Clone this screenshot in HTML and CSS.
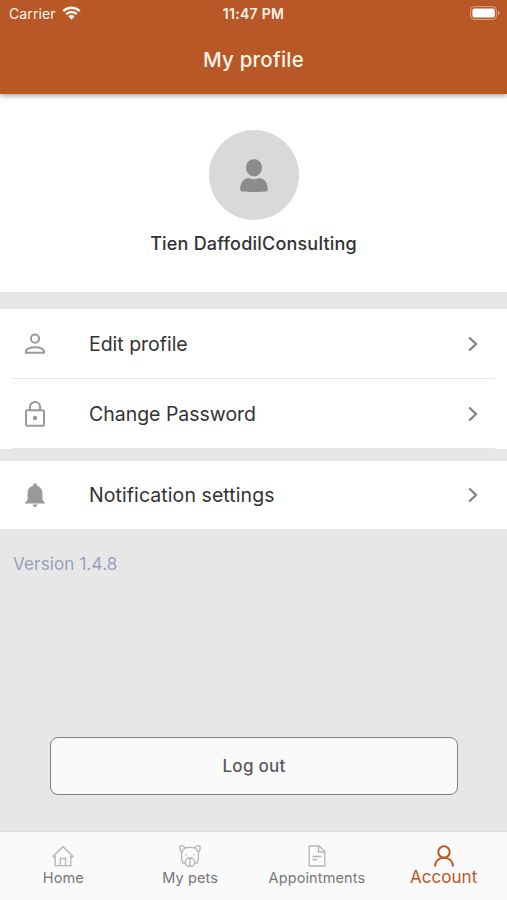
FILE: index.html
```html
<!DOCTYPE html>
<html lang="en">
<head>
    <meta charset="UTF-8">
    <meta name="viewport" content="width=device-width, initial-scale=1.0">
    <title>My profile</title>
    <link rel="stylesheet" href="styles.css">
</head>
<body>
    <header class="header">
        <div class="status-bar">
            <div class="carrier">
                <span>Carrier</span>
                <svg class="wifi" viewBox="0 0 19 14" width="19" height="14">
                    <path d="M1.3 5.2a11.7 11.7 0 0 1 16.4 0M4.2 8.2a7.6 7.6 0 0 1 10.6 0" fill="none" stroke="currentColor" stroke-width="2.5"/>
                    <path d="M6.300 10.300a4.600 4.600 0 0 1 6.400 0L9.500 13.700z" fill="currentColor"/>
                </svg>
            </div>
            <div class="time">11:47 PM</div>
            <svg class="battery" viewBox="0 0 30 14" width="30" height="14">
                <rect x=".6" y=".6" width="25.8" height="12.8" rx="3.6" fill="none" stroke="currentColor" opacity=".45"/>
                <rect x="2.4" y="2.4" width="22.4" height="9.2" rx="2" fill="currentColor"/>
                <path d="M28 4.8c2 .8 2 3.6 0 4.4z" fill="currentColor" opacity=".5"/>
            </svg>
        </div>
        <h1 class="title">My profile</h1>
    </header>

    <main class="content">
        <section class="profile">
            <div class="avatar">
                <svg viewBox="0 0 28 33" width="28" height="33">
                    <ellipse cx="14" cy="8.7" rx="8.1" ry="8.7"/>
                    <path d="M8.2 19C10 18.900 11 20.300 14 20.300s4-1.400 5.800-1.300c5 .6 8 5.500 8 11.200 0 1.500-.8 2.100-2.300 2.300-5.500.6-17.500.6-23 0C1 32.300.2 31.700.2 30.200.2 24.500 3.200 19.600 8.200 19z"/>
                </svg>
            </div>
            <div class="name">Tien DaffodilConsulting</div>
        </section>

        <nav class="menu">
            <a class="menu-item">
                <svg class="menu-icon" viewBox="0 0 20 26" width="20" height="26">
                    <circle cx="10" cy="7.7" r="4.1"/>
                    <path d="M1 21.800v-1.300c0-2.800 4.500-4.300 9-4.300s9 1.500 9 4.300v1.300z"/>
                </svg>
                <span class="menu-label">Edit profile</span>
                <svg class="chevron" viewBox="0 0 10 16" width="10" height="16"><path d="M1.2 1.500 8 8l-6.800 6.500"/></svg>
            </a>
            <a class="menu-item">
                <svg class="menu-icon" viewBox="0 0 20 26" width="20" height="26">
                    <rect x="1" y="9.3" width="18" height="15.4" rx="1.3"/>
                    <path d="M4.900 9V6.100a5.100 5.100 0 0 1 10.200 0V9"/>
                    <circle class="dot" cx="10" cy="17" r="2.2"/>
                </svg>
                <span class="menu-label">Change Password</span>
                <svg class="chevron" viewBox="0 0 10 16" width="10" height="16"><path d="M1.2 1.500 8 8l-6.800 6.500"/></svg>
            </a>
        </nav>

        <nav class="menu menu-last">
            <a class="menu-item">
                <svg class="menu-icon bell" viewBox="0 0 20 26" width="20" height="26">
                    <path d="M10 1.200c1.200 0 1.900.8 1.900 2v.6c3.500.9 5.500 3.800 5.500 7.300v7l2.500 2.400v1H.1v-1l2.500-2.400v-7c0-3.500 2-6.400 5.500-7.300v-.6c0-1.200.7-2 1.900-2zM7.600 22.600h4.800c0 1.500-1 2.500-2.400 2.500s-2.400-1-2.400-2.500z"/>
                </svg>
                <span class="menu-label wide">Notification settings</span>
                <svg class="chevron" viewBox="0 0 10 16" width="10" height="16"><path d="M1.2 1.500 8 8l-6.800 6.500"/></svg>
            </a>
        </nav>

        <p class="version">Version 1.4.8</p>
        <button class="logout-btn">Log out</button>
    </main>

    <footer class="tab-bar">
        <a class="tab">
            <svg viewBox="0 0 22 22" width="22" height="22">
                <path d="M1 11.300 11 1.700l10 9.600-1.200 1.100-1-.9v9.100H3.200v-9.100l-1 .9zM8.400 20.500v-7h5.200v7"/>
            </svg>
            <span>Home</span>
        </a>
        <a class="tab">
            <svg viewBox="0 0 22 22" width="22" height="22">
                <path d="M6.500 2.800C4.800 1.300 2.400.3 1.300.9.400 2 .8 5.800 2.600 7.800v7.500l1.200 1.200-.3 1.300 2.800.5c.3 1.600 1.300 2.600 2.600 2.900.9.200 1.500-.1 2.100-.7.600.6 1.200.9 2.100.7 1.300-.3 2.300-1.300 2.600-2.900l2.800-.5-.3-1.300 1.200-1.200V7.800c1.800-2 2.200-5.800 1.300-6.900-1.100-.6-3.500.4-5.200 1.900-3-.5-6-.5-9 0z"/>
                <path d="M2.600 7.800c.6-2 1.900-3.800 3.900-5M19.400 7.800c-.6-2-1.900-3.800-3.900-5M6.600 9.600l1.500.6M15.400 9.600l-1.500.6M9.500 13h3L11 14.500zM11 14.500v6M9.500 13c-2.200.8-3.400 2.500-3.200 5.300M12.500 13c2.200.8 3.400 2.500 3.200 5.300"/>
            </svg>
            <span>My pets</span>
        </a>
        <a class="tab">
            <svg viewBox="0 0 22 22" width="22" height="22">
                <path d="M3.200 1h9.900l5.700 5.500V21H3.200zM12.500 1v6h6M6.500 11.500h8.800M6.500 14.700h4.800"/>
            </svg>
            <span>Appointments</span>
        </a>
        <a class="tab active">
            <svg viewBox="0 0 22 22" width="22" height="22">
                <circle cx="11" cy="7" r="5.7"/>
                <path d="M2 21.500c.2-5.300 3.500-8.800 9-8.800s8.800 3.500 9 8.800"/>
            </svg>
            <span>Account</span>
        </a>
    </footer>
</body>
</html>
```
FILE: styles.css
```css
:root {
    --primary: #b75826;
    --page: #e7e7e7;
    --icon: #999999;
    --text: #333333;
}

* {
    box-sizing: border-box;
}

body {
    margin: 0;
    height: 900px;
    display: flex;
    flex-direction: column;
    font-family: Inter, "Liberation Sans", sans-serif;
    background: var(--page);
    color: var(--text);
    overflow: hidden;
}

/* Header */
.header {
    height: 94px;
    flex-shrink: 0;
    background: var(--primary);
    color: #fff4ea;
    box-shadow: 0 2px 5px rgba(0, 0, 0, 0.35);
    z-index: 1;
}

.status-bar {
    height: 27px;
    padding: 0 7px 0 9px;
    display: grid;
    grid-template-columns: 1fr auto 1fr;
    align-items: center;
    font-size: 14px;
}

.carrier {
    display: flex;
    align-items: center;
    gap: 6px;
    letter-spacing: 0.1px;
}

.wifi {
    margin-top: -2px;
}

.time {
    margin-right: 2px;
    font-size: 14px;
    font-weight: 600;
    letter-spacing: 0.3px;
}

.battery {
    justify-self: end;
    margin-top: -1px;
    color: #ffffff;
}

.title {
    margin: 0;
    text-align: center;
    font-size: 20.5px;
    line-height: 66px;
    font-weight: 500;
    letter-spacing: 0.2px;
}

.content {
    flex: 1;
    display: flex;
    flex-direction: column;
}

/* Profile */
.profile {
    height: 198px;
    padding-top: 36px;
    display: flex;
    flex-direction: column;
    align-items: center;
    background: #ffffff;
}

.avatar {
    width: 90px;
    height: 90px;
    border-radius: 50%;
    background: #d9d9d9;
    display: flex;
    align-items: center;
    justify-content: center;
}

.avatar svg {
    fill: #8b8b8b;
}

.name {
    margin-top: 12px;
    font-size: 18px;
    line-height: 24px;
    font-weight: 500;
    letter-spacing: 0.2px;
}

/* Menu */
.menu {
    margin-top: 17px;
    background: #ffffff;
}

.menu-last {
    margin-top: 12px;
}

.menu-item {
    height: 70px;
    margin: 0 12px;
    padding: 0 17px 0 13px;
    display: flex;
    align-items: center;
    border-bottom: 1px solid #e7e7e7;
}

.menu-last .menu-item {
    height: 68px;
    border-bottom: none;
}

.menu-icon {
    fill: none;
    stroke: var(--icon);
    stroke-width: 2;
}

.menu-icon .dot,
.bell {
    fill: var(--icon);
    stroke: none;
}

.menu-label {
    flex: 1;
    margin-left: 44px;
    font-size: 19.5px;
    letter-spacing: -0.02px;
}

.menu-label.wide {
    letter-spacing: 0.08px;
}

.chevron {
    fill: none;
    stroke: #868686;
    stroke-width: 2.4;
}

.version {
    margin: 24px 13px 0;
    font-size: 17px;
    line-height: 22px;
    letter-spacing: 0.15px;
    color: #9b9fb6;
}

.logout-btn {
    height: 58px;
    margin: auto 49px 36px 50px;
    border: 1.5px solid #808080;
    border-radius: 8px;
    background: #fafafa;
    color: #5a5a5a;
    font-family: inherit;
    font-size: 17px;
    font-weight: 500;
    letter-spacing: 0.25px;
}

/* Tab bar */
.tab-bar {
    height: 69px;
    flex-shrink: 0;
    display: grid;
    grid-template-columns: repeat(4, 1fr);
    background: #fafafa;
    border-top: 1px solid #dedede;
}

.tab {
    display: flex;
    flex-direction: column;
    align-items: center;
    padding-top: 13px;
    font-size: 14.5px;
    line-height: 22px;
    letter-spacing: 0.12px;
    color: #777777;
}

.tab svg {
    fill: none;
    stroke: #b5b5b5;
    stroke-width: 1.3;
}

.tab.active {
    color: var(--primary);
    font-size: 17px;
    line-height: 20px;
    letter-spacing: 0.05px;
}

.tab.active svg {
    stroke: var(--primary);
    stroke-width: 2;
}
```
